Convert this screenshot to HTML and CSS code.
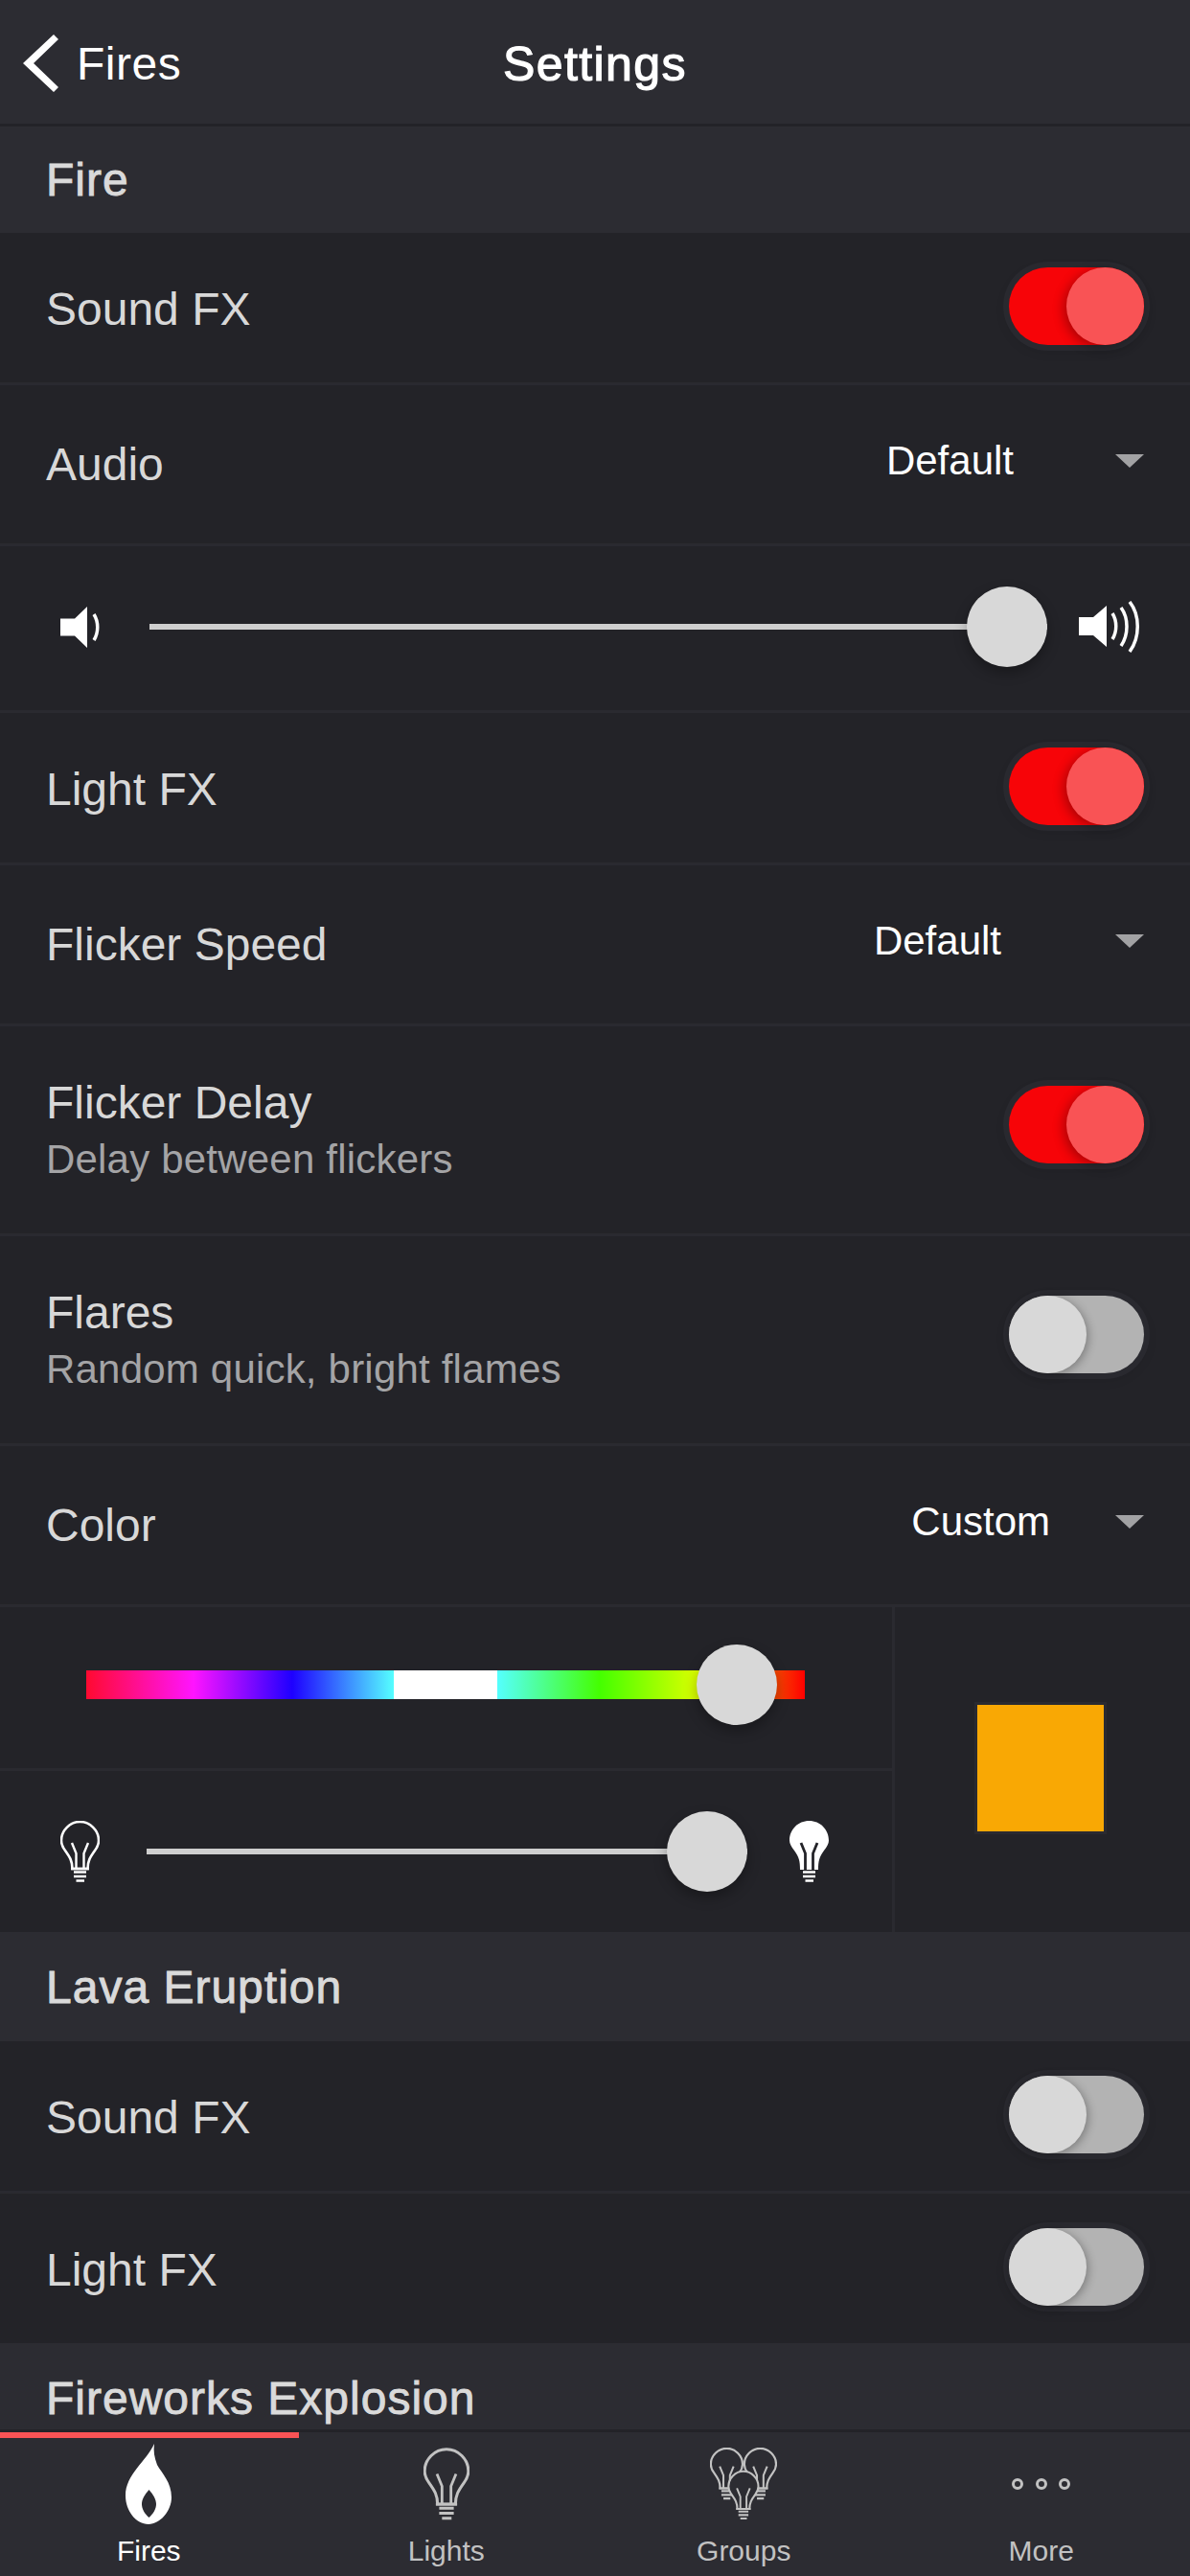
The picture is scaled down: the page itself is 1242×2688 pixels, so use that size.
FILE: index.html
```html
<!DOCTYPE html>
<html lang="en">
<head>
  <meta charset="UTF-8" />
  <title>Settings</title>
  <link rel="stylesheet" href="styles.css">
</head>
<body>

<svg class="defs" width="0" height="0">
  <g id="bulb-g">
    <path d="M12.5 50 C12.5 42 10 38 5 31 C2 27 1 24 1 20.500 C1 10 10 1 20.500 1 C31 1 40 10 40 20.500 C40 24 39 27 36 31 C31 38 28.500 42 28.500 50 Z" stroke="currentColor" stroke-width="2.600"/>
    <path d="M12 23 L16.500 34 V50 M29 23 L24.500 34 V50 M11 50 H30" fill="none" stroke="currentColor" stroke-width="2.400"/>
    <path d="M14 53.500 H27 M14 58 H27 M16.500 62.500 H25" fill="none" stroke="currentColor" stroke-width="2.600"/>
  </g>
  <symbol id="bulb-lines" viewBox="0 0 41 64">
    <use href="#bulb-g" fill="none"/>
  </symbol>
  <symbol id="bulb-solid" viewBox="0 0 41 64">
    <path d="M11 51 C11 42 10 38 5 31 C2 27 0 24 0 20.500 C0 9 9 0 20.500 0 C32 0 41 9 41 20.500 C41 24 39 27 36 31 C31 38 30 42 30 51 Z" fill="currentColor"/>
    <path d="M12 23 L16.500 34 V51 M29 23 L24.500 34 V51" fill="none" stroke="#232328" stroke-width="2.800"/>
    <path d="M14 53.500 H27 M14 58 H27 M16.500 62.500 H25" fill="none" stroke="currentColor" stroke-width="2.600"/>
  </symbol>
</svg>

<div class="app">
  <header class="navbar">
    <div class="back">
      <svg class="chevron" viewBox="0 0 37 60"><path d="M32 0 L37 5 L11 30 L37 55 L32 60 L0 30 Z" fill="#fff"/></svg>
      <span>Fires</span>
    </div>
    <div class="nav-title">Settings</div>
  </header>

  <main class="content">
    <div class="section">Fire</div>

    <div class="row row-toggle">
      <span class="label">Sound FX</span>
      <div class="switch on"><div class="knob"></div></div>
    </div>

    <div class="row row-select">
      <span class="label">Audio</span>
      <div class="select gap-audio"><span>Default</span><i class="caret"></i></div>
    </div>

    <div class="row row-volume">
      <svg class="spk-low" viewBox="0 0 41 43">
        <path d="M0 12.500 H15 L28 0 V43 L15 30.500 H0 Z" fill="#fff"/>
        <path d="M35 8 C40 16 40 27 35 35" fill="none" stroke="#fff" stroke-width="3.500"/>
      </svg>
      <div class="slider volume-slider">
        <div class="track"></div>
        <div class="thumb"></div>
      </div>
      <svg class="spk-high" viewBox="0 0 64 54">
        <path d="M0 17 H15 L29 5 V48 L15 36 H0 Z" fill="#fff"/>
        <path d="M35 13 C40 21 40 32 35 40 M44 7 C52 18 52 35 44 47 M53 1 C64 15 64 38 53 53" fill="none" stroke="#fff" stroke-width="3.500"/>
      </svg>
    </div>

    <div class="row row-toggle">
      <span class="label">Light FX</span>
      <div class="switch on"><div class="knob"></div></div>
    </div>

    <div class="row row-select">
      <span class="label">Flicker Speed</span>
      <div class="select gap-speed"><span>Default</span><i class="caret"></i></div>
    </div>

    <div class="row row-double">
      <div class="text-stack">
        <span class="label">Flicker Delay</span>
        <span class="sublabel">Delay between flickers</span>
      </div>
      <div class="switch on"><div class="knob"></div></div>
    </div>

    <div class="row row-double">
      <div class="text-stack">
        <span class="label">Flares</span>
        <span class="sublabel">Random quick, bright flames</span>
      </div>
      <div class="switch"><div class="knob"></div></div>
    </div>

    <div class="row row-select">
      <span class="label">Color</span>
      <div class="select gap-color"><span>Custom</span><i class="caret"></i></div>
    </div>

    <div class="color-panel">
      <div class="color-sliders">
        <div class="color-row hue-row">
          <div class="slider hue-slider">
            <div class="hue-bar"></div>
            <div class="thumb"></div>
          </div>
        </div>
        <div class="color-row level-row">
          <svg class="bulb"><use href="#bulb-lines"/></svg>
          <div class="slider level-slider">
            <div class="track"></div>
            <div class="thumb"></div>
          </div>
          <svg class="bulb"><use href="#bulb-solid"/></svg>
        </div>
      </div>
      <div class="swatch-box"><div class="swatch"></div></div>
    </div>

    <div class="section section-tall">Lava Eruption</div>

    <div class="row row-toggle">
      <span class="label">Sound FX</span>
      <div class="switch"><div class="knob"></div></div>
    </div>

    <div class="row row-toggle row-last">
      <span class="label">Light FX</span>
      <div class="switch"><div class="knob"></div></div>
    </div>

    <div class="section section-cut">Fireworks Explosion</div>
  </main>

  <nav class="tabbar">
    <div class="tab-marker"></div>
    <div class="tab active">
      <svg class="tab-icon flame" viewBox="0 0 48 84">
        <path fill-rule="evenodd" d="M30 0 C29 8 30 14 33 22 C38 31 48 40 48 56 C48 70 36 84 24 84 C11 84 0 70 0 54 C0 32 22 18 30 0 Z M24.500 48 C20 53 17 58 17 63 C17 68 20 73 24.500 77 C29 73 32 68 32 63 C32 58 29 53 24.500 48 Z" fill="#fff"/>
      </svg>
      <span>Fires</span>
    </div>
    <div class="tab">
      <svg class="tab-icon bulb-tab"><use href="#bulb-lines"/></svg>
      <span>Lights</span>
    </div>
    <div class="tab">
      <svg class="tab-icon group" viewBox="0 0 70 76">
        <use href="#bulb-g" fill="none" transform="translate(0 0) scale(0.85)"/>
        <use href="#bulb-g" fill="none" transform="translate(35 0) scale(0.85)"/>
        <use href="#bulb-g" fill="#2c2c32" transform="translate(18.500 24) scale(0.8)"/>
      </svg>
      <span>Groups</span>
    </div>
    <div class="tab">
      <div class="tab-icon dots"><i></i><i></i><i></i></div>
      <span>More</span>
    </div>
  </nav>
</div>

</body>
</html>
```

FILE: styles.css
```css
* {
  box-sizing: border-box;
}
body {
  margin: 0;
  font-family: "Liberation Sans", Arial, sans-serif;
  background-color: #232328;
}
.defs {
  position: absolute;
}
.app {
  width: 1242px;
  height: 2688px;
  display: flex;
  flex-direction: column;
  overflow: hidden;
}

/* Top bar */
.navbar {
  height: 132px;
  flex-shrink: 0;
  background-color: #2c2c32;
  border-bottom: 3px solid #232328;
  display: flex;
  align-items: center;
  justify-content: center;
  padding-top: 4px;
  color: #fff;
  font-size: 48px;
}
.back {
  position: absolute;
  left: 24px;
  top: 36px;
  display: flex;
  align-items: center;
  gap: 19px;
  letter-spacing: 0.5px;
}
.chevron {
  width: 37px;
  height: 60px;
}
.nav-title {
  font-size: 50px;
  letter-spacing: 1.4px;
  -webkit-text-stroke: 1.2px #fff;
}

/* Scrolling list */
.content {
  flex: 1;
  min-height: 0;
  overflow: hidden;
}
.section {
  height: 111px;
  display: flex;
  align-items: center;
  padding: 0 48px;
  background-color: #2c2c32;
  color: #dadada;
  font-size: 48px;
  letter-spacing: 1px;
  -webkit-text-stroke: 0.9px #dadada;
}
.section-tall {
  height: 114px;
}
.section-cut {
  height: 90px;
  align-items: flex-start;
  line-height: 115px;
}
.row {
  display: flex;
  align-items: center;
  justify-content: space-between;
  padding: 0 48px;
  border-bottom: 3px solid #2a2a30;
}
.row-toggle {
  height: 159px;
  padding-top: 3px;
}
.row-select {
  height: 168px;
}
.row-volume {
  height: 174px;
  justify-content: flex-start;
  padding: 0 52px 3px 63px;
}
.row-double {
  height: 219px;
}
.row-last {
  height: 156px;
  border-bottom: none;
}
.label {
  font-size: 48px;
  color: #d8d8d8;
}
.text-stack {
  display: flex;
  flex-direction: column;
  gap: 8px;
  margin-top: -2px;
}
.sublabel {
  font-size: 42px;
  letter-spacing: 0.2px;
  color: #a4a4a6;
}

/* Toggle */
.switch {
  width: 153px;
  height: 93px;
  margin-right: -6px;
  margin-top: -6px;
  padding: 6px;
  border-radius: 47px;
  background-color: #29292f;
  box-shadow: 0 4px 10px rgba(0,0,0,0.06);
}
.switch::before {
  content: "";
  display: block;
  height: 81px;
  border-radius: 41px;
  background-color: #b3b3b3;
}
.switch .knob {
  width: 81px;
  height: 81px;
  margin-top: -81px;
  border-radius: 50%;
  background-color: #d8d8d8;
  box-shadow: 2px 2px 10px rgba(0,0,0,0.3);
}
.switch.on::before {
  background-color: #f70408;
}
.switch.on .knob {
  margin-left: 60px;
  background-color: #f95355;
  box-shadow: -3px 3px 12px rgba(0,0,0,0.3);
}
.row-double .switch {
  margin-top: -12px;
}

/* Dropdown */
.select {
  display: flex;
  align-items: center;
  margin-top: -7px;
  font-size: 42px;
  color: #fff;
}
.gap-audio {
  gap: 106px;
}
.gap-speed {
  gap: 119px;
}
.gap-color {
  gap: 68px;
}
.caret {
  width: 0;
  height: 0;
  border-left: 15px solid transparent;
  border-right: 15px solid transparent;
  border-top: 14px solid #a2a2a4;
}

/* Sliders */
.slider {
  position: relative;
  display: flex;
  align-items: center;
  height: 84px;
}
.track {
  width: 100%;
  height: 6px;
  background-color: #cfcfcf;
}
.thumb {
  position: absolute;
  top: 0;
  width: 84px;
  height: 84px;
  border-radius: 50%;
  background-color: #d8d8d8;
  box-shadow: 0 6px 14px rgba(0,0,0,0.3);
}
.spk-low {
  width: 41px;
  height: 43px;
  margin-right: 52px;
}
.spk-high {
  width: 64px;
  height: 54px;
  margin-left: 33px;
}
.volume-slider {
  width: 937px;
}
.volume-slider .thumb {
  right: 0;
}

/* Color block */
.color-panel {
  display: flex;
  height: 339px;
}
.color-sliders {
  width: 931px;
  flex-shrink: 0;
}
.color-row {
  display: flex;
  align-items: center;
}
.hue-row {
  height: 171px;
  padding-left: 90px;
  padding-bottom: 6px;
  border-bottom: 3px solid #2a2a30;
}
.level-row {
  height: 168px;
  padding-left: 63px;
}
.hue-slider {
  width: 750px;
}
.hue-bar {
  width: 100%;
  height: 30px;
  background: linear-gradient(to right, #ff0a30 0, #ff14ff 112px, #1e00ff 215px, #55ffff 321px, #fff 321px, #fff 429px, #55ffff 429px, #44ff00 536px, #ddff00 639px, #ff0000 750px);
}
.hue-slider .thumb {
  left: 637px;
}
.level-slider {
  width: 627px;
  margin: 0 44px 0 49px;
}
.level-slider .thumb {
  right: 0;
}
.bulb {
  width: 41px;
  height: 64px;
  color: #fff;
  flex-shrink: 0;
}
.swatch-box {
  flex: 1;
  display: flex;
  align-items: center;
  justify-content: center;
  padding: 0 4px 3px 0;
  border-left: 3px solid #2a2a30;
}
.swatch {
  width: 138px;
  height: 138px;
  border: 3px solid #2a2a30;
  background-color: #f9a804;
}

/* Tab bar */
.tabbar {
  position: relative;
  height: 153px;
  flex-shrink: 0;
  display: flex;
  background-color: #2c2c32;
  border-top: 3px solid #232328;
}
.tab-marker {
  position: absolute;
  left: 0;
  top: 0;
  width: 312px;
  height: 6px;
  background-color: #f95355;
}
.tab {
  flex: 1;
  display: flex;
  flex-direction: column;
  align-items: center;
  color: #c2c2c2;
  font-size: 30px;
}
.tab.active {
  color: #fff;
}
.tab-icon {
  height: 84px;
  margin-top: 12px;
  margin-bottom: 11px;
}
.flame {
  width: 48px;
}
.bulb-tab {
  width: 48px;
  height: 76px;
  margin-top: 16px;
  margin-bottom: 15px;
}
.group {
  width: 70px;
  height: 76px;
  margin-top: 16px;
  margin-bottom: 15px;
}
.dots {
  display: flex;
  align-items: center;
  gap: 12.500px;
}
.dots i {
  width: 12px;
  height: 12px;
  border: 3px solid #c2c2c2;
  border-radius: 50%;
}
```
